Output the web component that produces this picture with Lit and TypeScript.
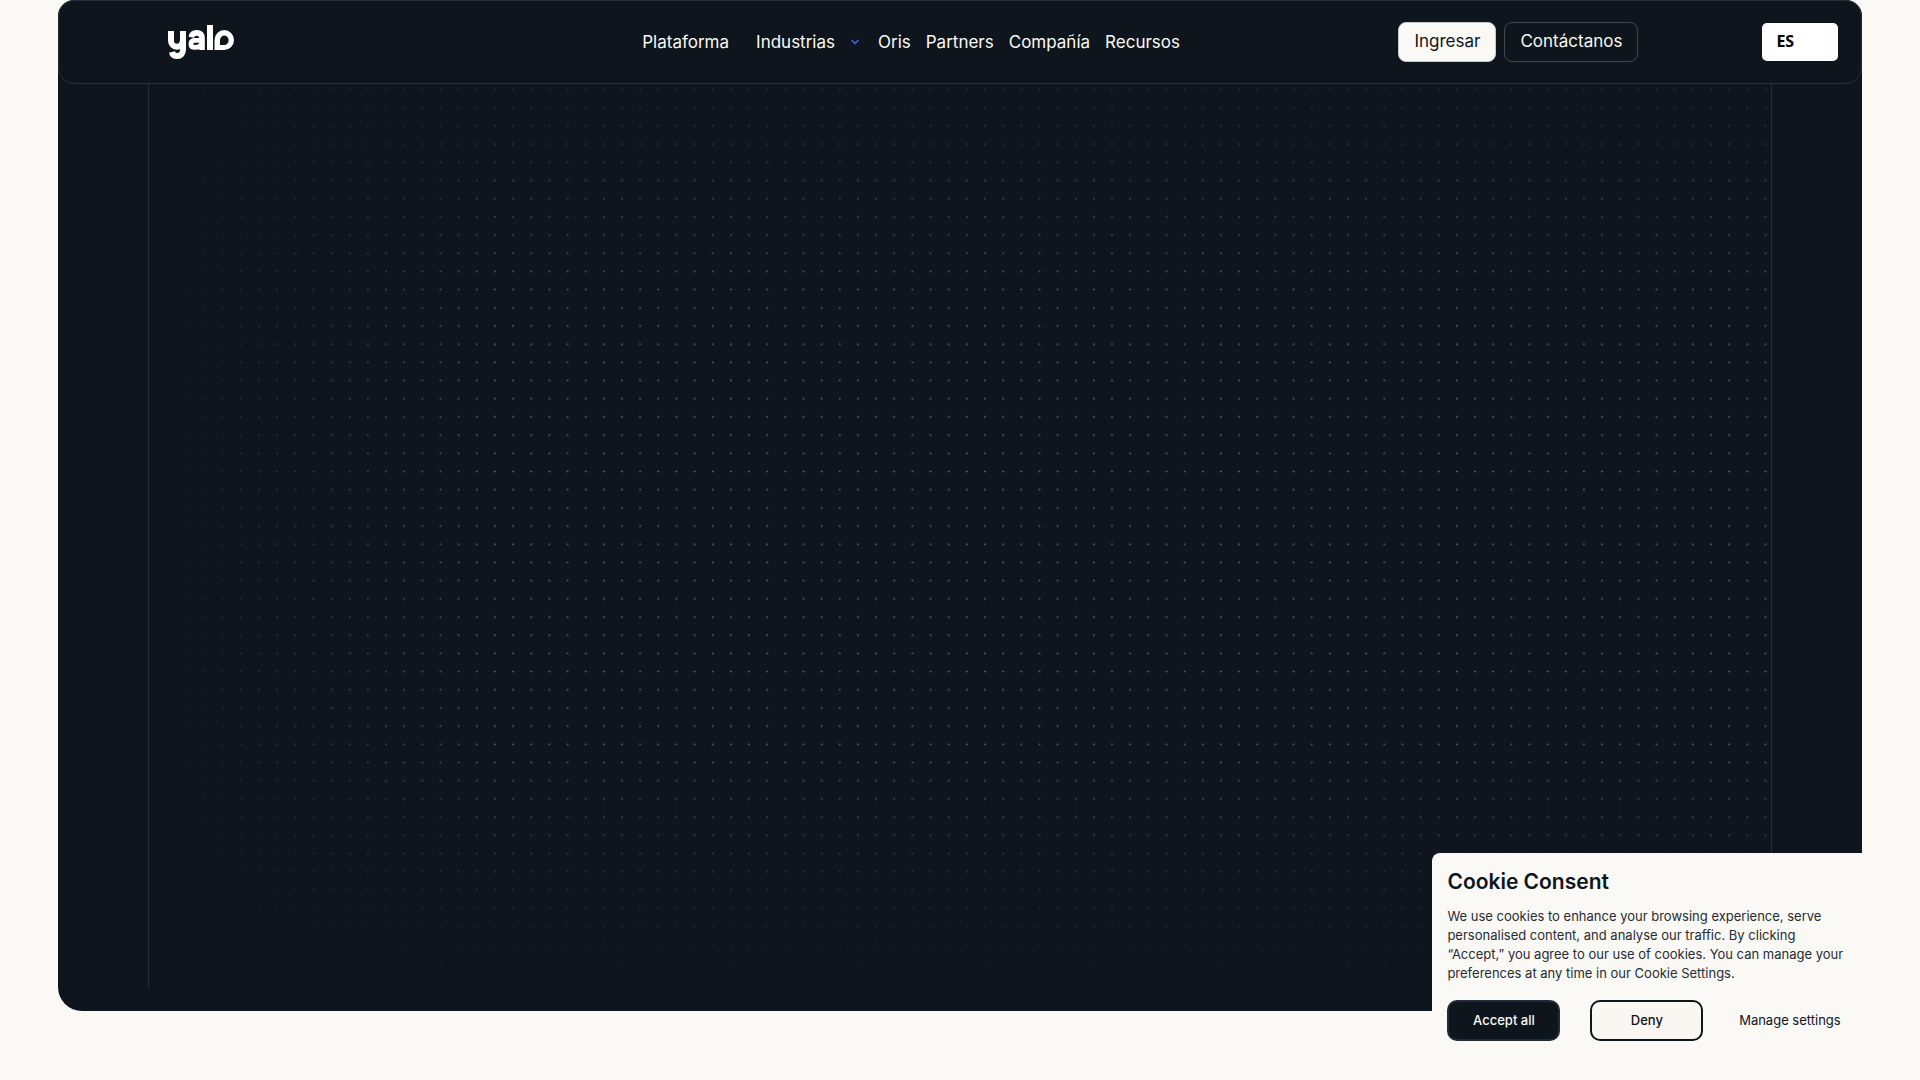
import { LitElement, html, css, svg } from "lit";
import { customElement, property } from "lit/decorators.js";

@customElement("yalo-logo")
class YaloLogo extends LitElement {
  static styles = css`
    :host { display: block; }
    svg { display: block; }
  `;
  render() {
    return html`<svg width="66" height="34" viewBox="0 0 66 34" role="img" aria-label="Yalo">
      <g fill="none" stroke="#fff" stroke-width="6">
        <path d="M3 6V15.500a5.800 6.200 0 0 0 11.800 0" />
        <path d="M15 6V24.500c0 4.300-2.500 6.500-5.800 6.500-3 0-4.700-1.400-5.300-4" />
        <path d="M23.300 12.200c.5-3 2.300-4.300 5.200-4.300 3.800 0 5.500 2 5.500 5.400V25" stroke-width="5.600" />
        <path d="M34 15.400h-6.500c-3 0-4.600 1.200-4.600 3.500s1.600 3.500 4.100 3.500c3.200 0 7-1.700 7-4.500" stroke-width="4.800" />
        <path d="M42 0V25" />
      </g>
      <path fill="#fff" fill-rule="evenodd" d="M46.500 25V15a9.750 10 0 1 1 9.750 10ZM52 20V15a4.300 4.700 0 1 1 4.300 5Z" />
    </svg>`;
  }
}

@customElement("dot-field")
class DotField extends LitElement {
  static styles = css`
    :host { display: block; overflow: hidden; }
    .dots {
      display: block; width: 100%; height: 100%;
      -webkit-mask-image: linear-gradient(to right, transparent, rgba(0,0,0,.5) 9%, #000 22%), linear-gradient(to bottom, rgba(0,0,0,.3), #000 26%, #000 72%, transparent);
      mask-image: linear-gradient(to right, transparent, rgba(0,0,0,.5) 9%, #000 22%), linear-gradient(to bottom, rgba(0,0,0,.3), #000 26%, #000 72%, transparent);
      -webkit-mask-composite: source-in;
      mask-composite: intersect;
    }
  `;
  render() {
    return html`<svg class="dots" aria-hidden="true">
      <defs>
        ${svg`<pattern id="grid" x="0.2" y="-3.6" width="18.15" height="18.19" patternUnits="userSpaceOnUse">
          <circle cx="0.9" cy="9.1" r="0.9" fill="#5d646d" />
        </pattern>`}
      </defs>
      <rect width="100%" height="100%" fill="url(#grid)" />
    </svg>`;
  }
}

@customElement("site-header")
class SiteHeader extends LitElement {
  @property({ attribute: false }) links = ["Oris", "Partners", "Compañía", "Recursos"];
  static styles = css`
    :host { display: block; }
    .bar {
      box-sizing: border-box; height: 84px; padding: 0 23px 0 calc(5% + 19px);
      display: grid; grid-template-columns: 1fr auto 1fr auto; align-items: center;
      border: 1px solid #272f39; border-radius: 16px; background: #0e151c;
    }
    .brand { justify-self: start; }
    .nav { display: flex; align-items: center; gap: 15px; padding: 0 0 1px 16px; }
    .link { color: #faf9f5; text-decoration: none; font-size: 17px; line-height: 24px; }
    .group { display: flex; align-items: center; gap: 16px; margin: 0 4px 0 12px; }
    .chevron { display: block; }
    .actions { display: flex; align-items: center; justify-content: flex-end; gap: 8px; }
    .button {
      box-sizing: border-box; height: 40px; padding: 0 15px 3px; display: flex; align-items: center;
      border: 1px solid #42474f; border-radius: 8px; font-size: 17px; color: #faf9f5; text-decoration: none;
    }
    .light { background: #faf9f5; border-color: #c4cad0; color: #0e151c; }
    .language {
      appearance: none; margin: 0 0 0 124px; width: 76px; height: 38px; padding: 0 14px 2px;
      border: 0; border-radius: 5px; background: #fff; color: #000;
      font: 700 16px "Noto Sans", sans-serif;
    }
  `;
  render() {
    return html`<header class="bar">
      <a class="brand" href="#" aria-label="Yalo"><yalo-logo></yalo-logo></a>
      <nav class="nav">
        <a class="link" href="#">Plataforma</a>
        <span class="group">
          <a class="link" href="#">Industrias</a>
          <svg class="chevron" width="8" height="6" viewBox="0 0 8 6" aria-hidden="true">
            <path d="M.6 1 4 4.600 7.400 1" fill="none" stroke="#416af0" stroke-width="1.4" />
          </svg>
        </span>
        ${this.links.map((l) => html`<a class="link" href="#">${l}</a>`)}
      </nav>
      <div class="actions">
        <a class="button light" href="#">Ingresar</a>
        <a class="button" href="#">Contáctanos</a>
      </div>
      <select class="language" aria-label="Idioma"><option>ES</option></select>
    </header>`;
  }
}

@customElement("cookie-consent")
class CookieConsent extends LitElement {
  static styles = css`
    :host { display: block; }
    .panel {
      box-sizing: border-box; padding: 15px 16px 15px 15px; height: 100%;
      background: #faf9f5; color: #0e151c; border-top-left-radius: 8px;
    }
    .title { margin: 0 0 11px; font-size: 21px; line-height: 28px; font-weight: 600; }
    .copy { margin: 0 0 17px; font-size: 13px; line-height: 19px; color: #262c33; }
    .choices { display: grid; grid-template-columns: repeat(3, 1fr); gap: 30px; }
    .choice {
      box-sizing: border-box; height: 41px; padding: 0 0 2px; border: 2px solid transparent; border-radius: 10px;
      background: none; color: #0e151c; font: 400 13px "Inter", sans-serif; white-space: nowrap;
    }
    .accept { background: #0e151c; border-color: #222c38; color: #faf9f5; font-weight: 500; }
    .deny { background: #faf6f1; border-color: #0e151c; font-weight: 500; }
  `;
  render() {
    return html`<section class="panel" aria-labelledby="consent-title">
      <h2 class="title" id="consent-title">Cookie Consent</h2>
      <p class="copy">
        We use cookies to enhance your browsing experience, serve<br />
        personalised content, and analyse our traffic. By clicking<br />
        “Accept,” you agree to our use of cookies. You can manage your<br />
        preferences at any time in our Cookie Settings.
      </p>
      <div class="choices">
        <button class="choice accept">Accept all</button>
        <button class="choice deny">Deny</button>
        <button class="choice">Manage settings</button>
      </div>
    </section>`;
  }
}

@customElement("app-root")
class AppRoot extends LitElement {
  static styles = css`
    :host {
      display: block; box-sizing: border-box; min-height: 100vh; padding: 0 3%;
      background: #faf9f5; font-family: "Inter", sans-serif;
    }
    .hero {
      box-sizing: border-box; min-height: calc(100vh - 69px); display: flex; flex-direction: column;
      background: #0e151c; border-radius: 16px 16px 24px 24px;
    }
    .stage { flex: 1; display: flex; margin: 0 5% 23px; border: solid #272f39; border-width: 0 1px; }
    .field { flex: 1; }
    .consent { position: fixed; right: 3%; bottom: 0; width: 430px; height: 227px; }
  `;
  render() {
    return html`<main class="hero">
        <site-header></site-header>
        <div class="stage"><dot-field class="field"></dot-field></div>
      </main>
      <cookie-consent class="consent"></cookie-consent>`;
  }
}
